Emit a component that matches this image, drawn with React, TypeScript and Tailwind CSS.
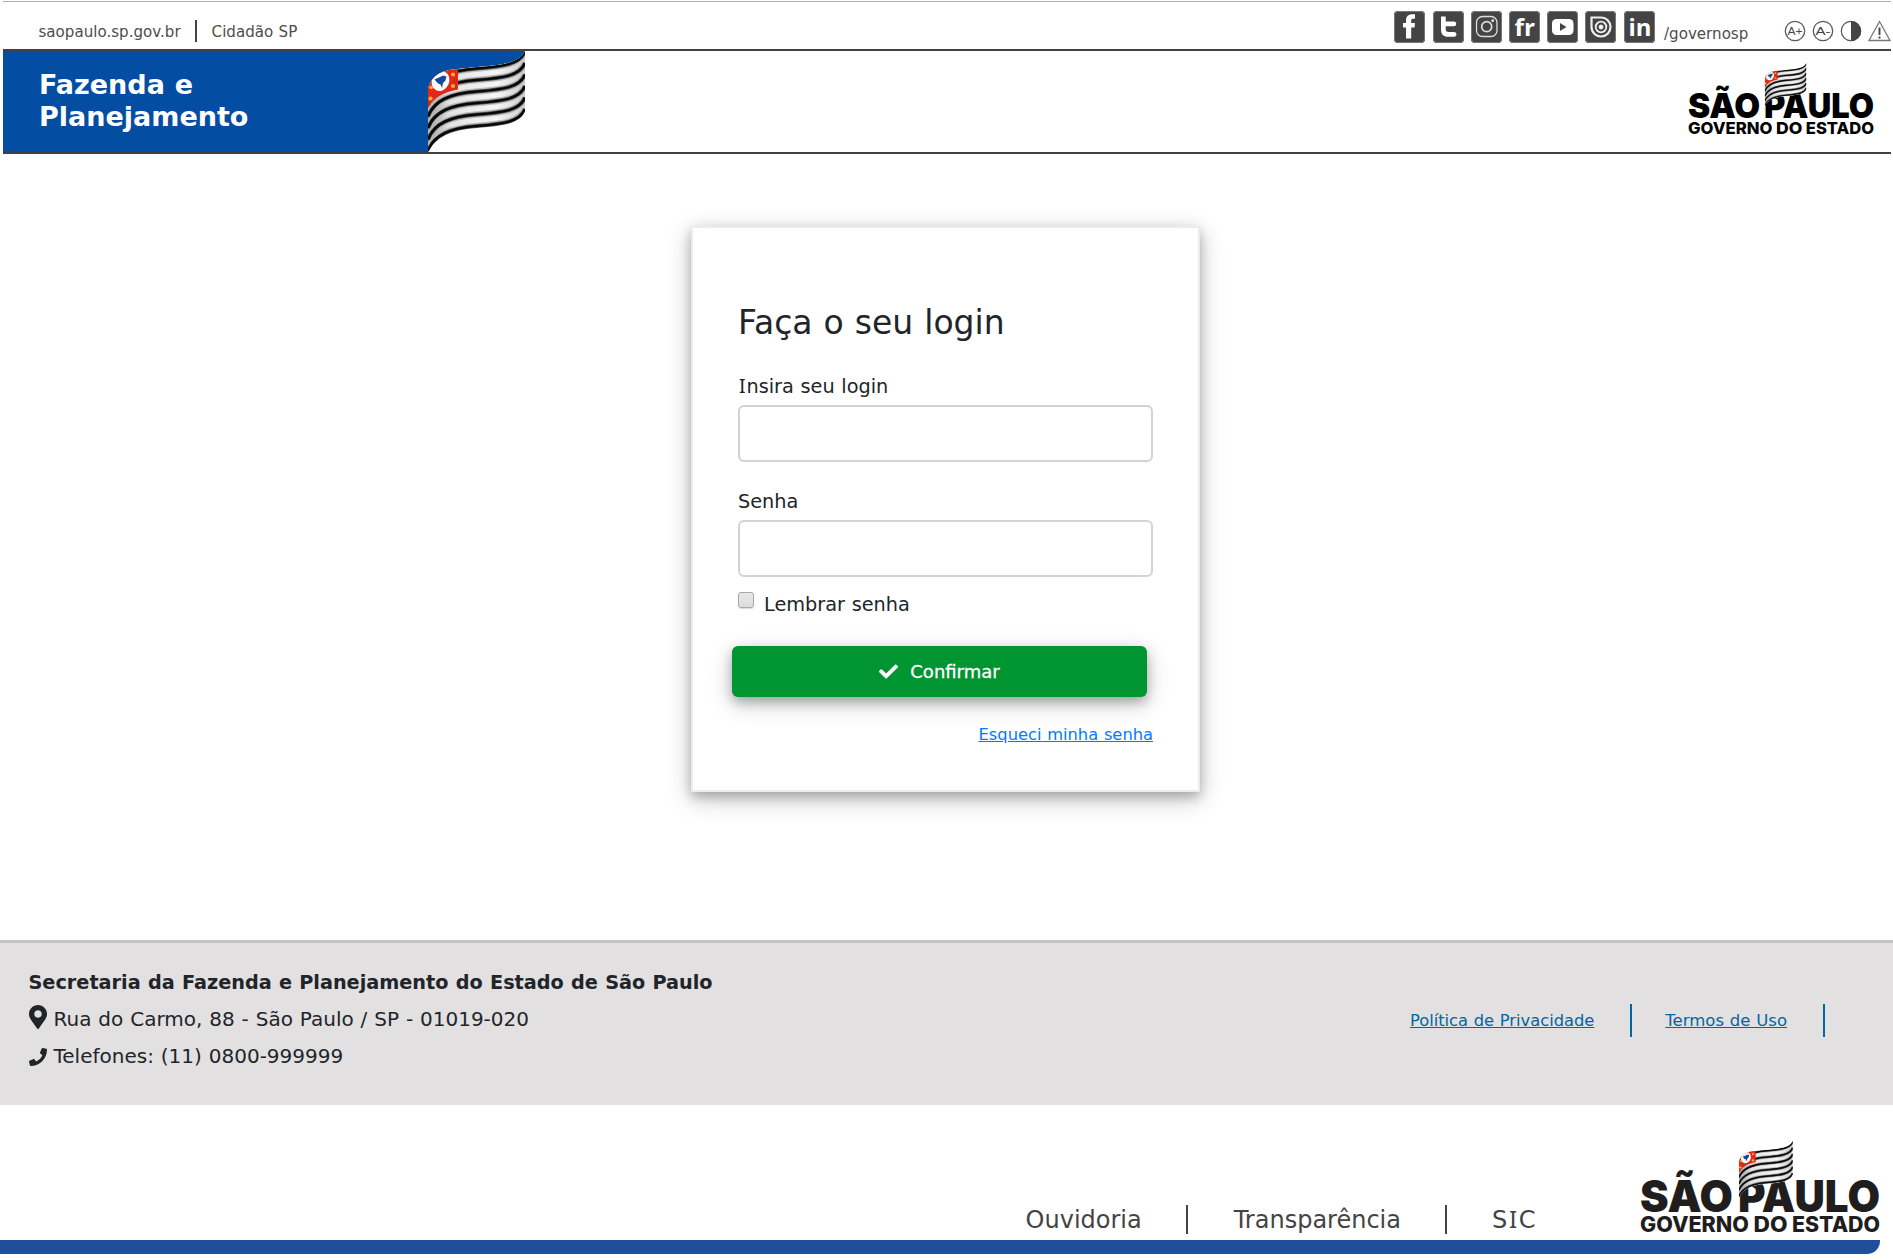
import React from "react";
import { FaCheck, FaMapMarkerAlt, FaPhone } from "react-icons/fa";

const CURVE = "C6,84 22,77 49,75 C75,73 92,71 97,58";

function FlagArt({ id }: { id: string }) {
  const offsets = [0, 11.5, 23, 34.5, 46, 57.5];
  return (
    <>
      <defs>
        <clipPath id={`${id}-clip`}>
          <path d="M0,37 C4,24 14,19 30,18 C37,17.500 43,16.500 49,16 C75,14 92,12 97,0 L97,60 C92,73 75,75 49,77 C22,79 6,87 0,102 Z" />
        </clipPath>
        <linearGradient id={`${id}-shade`} x1="0" x2="1" y1="0" y2="0">
          <stop offset="0" stopColor="#999" />
          <stop offset="0.22" stopColor="#e4e4e4" />
          <stop offset="0.7" stopColor="#f6f6f6" />
          <stop offset="1" stopColor="#cfcfcf" />
        </linearGradient>
      </defs>
      <g clipPath={`url(#${id}-clip)`}>
        <rect width="97" height="102" fill={`url(#${id}-shade)`} />
        {offsets.map((o) => (
          <g key={o} transform={`translate(0 ${-o})`} fill="none">
            <path d={`M0,99 ${CURVE}`} stroke="#bdbdbd" strokeWidth="6.500" />
            <path d={`M0,100 ${CURVE}`} stroke="#5a5a5a" strokeWidth="4" />
            <path d={`M0,100 ${CURVE}`} stroke="#080808" strokeWidth="2.600" />
          </g>
        ))}
        <path d="M0,30 L12,15 L30,14 V38.5 C18,41 6,45 0,57 Z" fill="#e3261b" />
        <ellipse cx="12.5" cy="30" rx="8.6" ry="10.300" transform="rotate(25 12.5 30)" fill="#fff" />
        <path d="M6.5,28.500 L12,26 L15,24.500 L18.5,25.500 L17.5,29.500 L15,32 L14,37 L12.5,33.5 L10,32.500 Z" fill="#164a9f" />
        <g fill="#f8b51e">
          <circle cx="25" cy="23.500" r="2.1" />
          <circle cx="25" cy="35" r="2.1" />
          <circle cx="3.200" cy="36.500" r="1.8" />
          <circle cx="2.5" cy="47.500" r="2.1" />
        </g>
      </g>
    </>
  );
}

function StateLogo({ id, className }: { id: string; className: string }) {
  return (
    <svg viewBox="0 0 240 92" className={className} fill="currentColor" fontFamily="Inter, sans-serif">
      <g fontWeight="900" fontSize="44">
        <text x="0" y="71" textLength="93" lengthAdjust="spacingAndGlyphs">SÃO</text>
        <text x="98" y="71" textLength="142" lengthAdjust="spacingAndGlyphs">PAULO</text>
      </g>
      <g fontWeight="800" fontSize="21">
        <text x="0" y="91" textLength="109" lengthAdjust="spacingAndGlyphs">GOVERNO</text>
        <text x="113.5" y="91" textLength="34" lengthAdjust="spacingAndGlyphs">DO</text>
        <text x="152" y="91" textLength="88" lengthAdjust="spacingAndGlyphs">ESTADO</text>
      </g>
      <g transform="translate(99 0) scale(.555)">
        <FlagArt id={id} />
      </g>
    </svg>
  );
}

const glyph = { fontFamily: "Open Sans, sans-serif", fontWeight: 700, fill: "#fff" };

const socialIcons: { name: string; art: React.ReactNode }[] = [
  { name: "Facebook", art: <path fill="#fff" d="M12 27.500V16.500H9V12h3V9.500c0-4.200 2.400-6.300 6-6.300h3v4.600h-2c-1.300 0-1.800.6-1.800 1.800V12h3.800l-.5 4.500h-3.300v11z" /> },
  { name: "Twitter", art: <path fill="#fff" d="M8 5.500h4.700V10.500H21c3 0 3 4.700 0 4.700h-8.300V18c0 2 1 3 2.800 3H21c3.300 0 3.300 4.800 0 4.800h-6c-4.500 0-7-2.500-7-7z" /> },
  {
    name: "Instagram",
    art: (
      <g fill="none" stroke="#ddd" strokeWidth="1.300">
        <rect x="5.500" y="5.500" width="20.500" height="20" rx="6" />
        <circle cx="15.700" cy="15.700" r="5" strokeWidth="1.700" />
        <circle cx="21.700" cy="9.700" r=".8" />
      </g>
    ),
  },
  { name: "Flickr", art: <text x="5.500" y="24.500" fontSize="24" textLength="20.500" lengthAdjust="spacingAndGlyphs" {...glyph}>fr</text> },
  {
    name: "YouTube",
    art: (
      <>
        <rect x="5" y="8" width="21.500" height="16" rx="4.500" fill="#fff" />
        <path d="M13 12v8l6.500-4z" fill="#444" />
      </>
    ),
  },
  {
    name: "Issuu",
    art: (
      <g fill="none" stroke="#eee">
        <path d="M6.500 6.500H16a9.500 9.500 0 1 1-9.500 9.500z" strokeWidth="2.200" />
        <circle cx="16" cy="16" r="5.300" strokeWidth="1.800" />
        <circle cx="16" cy="16" r="2" fill="#fff" />
      </g>
    ),
  },
  { name: "LinkedIn", art: <text x="4.500" y="24.500" fontSize="24" textLength="23" lengthAdjust="spacingAndGlyphs" {...glyph}>in</text> },
];

function SerifI() {
  return <span className="px-[0.05em] font-['Noto_Sans'] leading-none">I</span>;
}

function ResizeIcon({ label }: { label: string }) {
  return (
    <svg viewBox="0 0 22 22" className="size-[22px]">
      <circle cx="11" cy="11" r="9.700" fill="#fff" stroke="#5c5c5c" strokeWidth="1.300" />
      <text x="11" y="14.800" fontSize="11" fill="#444" textAnchor="middle" fontFamily="Liberation Sans, sans-serif" textLength="15" lengthAdjust="spacingAndGlyphs">{label}</text>
    </svg>
  );
}

function TopBar() {
  return (
    <div className="flex h-12 justify-between border-t border-[#adadad] text-[15.100px] leading-[22px] text-[#4d4d4d]">
      <nav className="flex pt-[18px] pl-[35.500px]">
        <a className="mt-px">saopaulo.sp.gov.br</a>
        <span className="mr-[15px] ml-[14px] h-[22px] w-0.5 bg-[#444]" />
        <a className="mt-px">Cidadão SP</a>
      </nav>
      <div className="flex items-start">
        <div className="mt-[9px] flex gap-[7.2px]">
          {socialIcons.map((s) => (
            <svg key={s.name} viewBox="0 0 31 32" className="h-8 w-[31px] rounded-[4px] bg-[#444]" aria-label={s.name}>
              {s.art}
              <rect x=".5" y=".5" width="30" height="31" rx="3.500" fill="none" stroke="#777" strokeWidth="1" />
            </svg>
          ))}
        </div>
        <span className="mt-[21px] ml-[9.500px] w-[86px]">/governosp</span>
        <div className="mt-[18px] ml-[34px] flex gap-1.5">
          <ResizeIcon label="A+" />
          <ResizeIcon label="A-" />
          <svg viewBox="0 0 22 22" className="size-[22px]">
            <circle cx="11" cy="11" r="9.700" fill="#fff" stroke="#555" strokeWidth="1.200" />
            <path d="M11 1a10 10 0 0 1 0 20z" fill="#444" />
          </svg>
          <svg viewBox="0 0 23 22" className="h-[22px] w-[23px]" fill="none" stroke="#777" strokeWidth="1.300">
            <path d="M11.500 1.500 22 20.500H1z" />
            <path d="M11.500 7.500v7.500M11.500 16.500v2" stroke="#444" strokeWidth="1.900" />
          </svg>
        </div>
      </div>
    </div>
  );
}

function Header() {
  return (
    <header className="ml-[3px] w-[1888px] pt-px">
      <TopBar />
      <div className="flex h-[105px] border-y-2 border-[#414143]">
        <div className="w-[425px] bg-[#034ea2] pt-[18px] pl-9 text-[27px] leading-8 font-bold text-white">
          Fazenda e<br />Planejamento
        </div>
        <svg viewBox="0 0 97 101" className="h-[101px] w-[97px]">
          <path d="M0,0 H97 C92,12 75,14 49,16 C43,16.500 37,17.500 30,18 C14,19 4,24 0,37 Z" fill="#034ea2" />
          <FlagArt id="banner" />
        </svg>
        <StateLogo id="top" className="mt-3 mr-[17px] ml-auto h-[71.300px] w-[186px] overflow-visible text-black" />
      </div>
    </header>
  );
}

const inputClass = "mt-1 block h-[57px] w-full rounded-md border-2 border-[#ced4da] bg-white px-3 outline-none";

function LoginCard() {
  return (
    <form className="mx-auto mt-[72px] h-[566px] w-[509px] border-2 border-[#ececec] bg-white px-[45px] pt-[75px] text-[19.300px] leading-7 text-[#212529] shadow-[0_5px_11px_rgba(0,0,0,0.25),0_7px_25px_rgba(0,0,0,0.2)]">
      <h1 className="text-[33px] leading-10">Faça o seu login</h1>
      <label className="mt-[30px] block">
        <SerifI />nsira seu login
        <input className={inputClass} />
      </label>
      <label className="mt-[26px] block">
        Senha
        <input type="password" className={inputClass} />
      </label>
      <label className="mt-[14px] flex">
        <input type="checkbox" className="mt-px mr-[10px] size-4 appearance-none rounded-[3px] border border-[#a8a8a8] bg-linear-to-b from-[#e8e8e8] to-[#dcdcdc] shadow-[0_1px_1px_rgba(0,0,0,0.15)]" />
        Lembrar senha
      </label>
      <button type="button" className="mt-[27px] -ml-1.5 flex h-[51px] w-[415px] items-center justify-center gap-3 rounded-md bg-[#009530] text-[18px] text-white shadow-[0_5px_11px_rgba(0,0,0,0.25),0_7px_25px_rgba(0,0,0,0.2)]">
        <FaCheck className="size-[19px]" />
        <span className="[-webkit-text-stroke:0.3px_white]">Confirmar</span>
      </button>
      <div className="mt-[26px] text-right text-[16.300px] leading-6">
        <a className="text-[#007bff] underline">Esqueci minha senha</a>
      </div>
    </form>
  );
}

function Footer() {
  return (
    <footer>
      <div className="flex h-[165px] justify-between border-t-[3px] border-[#c5c3c4] bg-[#e2e0e1]">
        <div className="pt-[21px] pl-[28.500px] text-[20px] leading-[37px] text-[#212529]">
          <p className="text-[19.250px] font-bold">Secretaria da Fazenda e Planejamento do Estado de São Paulo</p>
          <p className="flex">
            <FaMapMarkerAlt className="mt-1 mr-[7px] h-6 w-[18px]" />
            Rua do Carmo, 88 - São Paulo / SP - 01019-020
          </p>
          <p className="flex">
            <FaPhone className="mt-2.5 mr-[7px] size-[18px]" />
            Telefones: (11) 0800-999999
          </p>
        </div>
        <nav className="mr-[68px] flex pt-[61px] text-[16.300px] leading-[33px] text-[#0067a0]">
          <a className="underline">Política de Privacidade</a>
          <span className="mr-[33px] ml-9 h-[33px] w-0.5 bg-[#0067a0]" />
          <a className="text-[16.500px] underline">Termos de Uso</a>
          <span className="ml-9 h-[33px] w-0.5 bg-[#0067a0]" />
        </nav>
      </div>
      <div className="flex h-[135px] w-[1880px] items-end justify-end">
        <nav className="mr-[104px] mb-1.5 flex h-[29px] text-[24px] leading-[31px] text-[#444]">
          <a>Ouvidoria</a>
          <span className="mr-[46px] ml-11 w-0.5 bg-[#444]" />
          <a>Transparência</a>
          <span className="mr-[45px] ml-11 w-0.5 bg-[#444]" />
          <a className="tracking-[0.5px]">S<SerifI />C</a>
        </nav>
        <StateLogo id="bottom" className="mb-[7px] h-[92px] w-[240px] overflow-visible text-[#1f1d1e]" />
      </div>
      <div className="h-3.5 w-[1880px] rounded-br-[13px] bg-[#204e9c]" />
    </footer>
  );
}

export default function App() {
  return (
    <div className="h-[1260px] w-[1893px] overflow-hidden bg-white font-['DejaVu_Sans',Verdana,sans-serif] [word-spacing:0.034em]">
      <Header />
      <main className="flex h-[786px] items-start pr-0.5">
        <LoginCard />
      </main>
      <Footer />
    </div>
  );
}
